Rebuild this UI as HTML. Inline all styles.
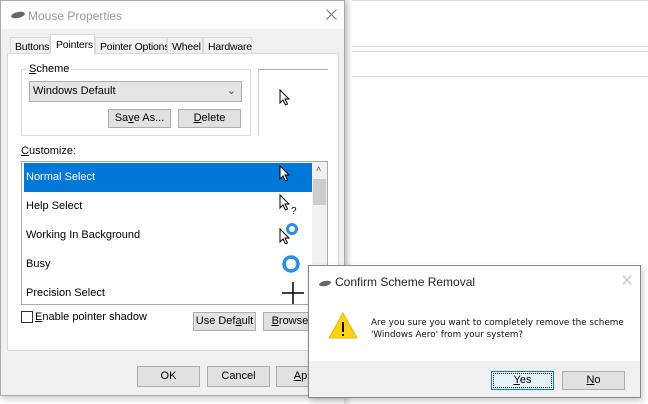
<!DOCTYPE html>
<html><head><style>
*{box-sizing:border-box;margin:0;padding:0}
body{width:648px;height:404px;background:#fff;position:relative;overflow:hidden;font-family:"Liberation Sans",sans-serif;font-size:11px;color:#000}
.a{position:absolute;white-space:nowrap}
.btn{position:absolute;background:#e1e1e1;border:1px solid #adadad;text-align:center;line-height:17px;font-size:11px;white-space:nowrap}
.hl{position:absolute;left:345px;right:0;height:1px;background:#d9d9d9}
u{text-decoration:underline}
.row{position:absolute;left:2px;width:288px;height:29px;line-height:29px;padding-left:2px}
.tab{font-size:10.5px;letter-spacing:-0.2px}
</style></head><body>
<div class="hl" style="top:0"></div>
<div class="hl" style="top:46px"></div>
<div class="hl" style="top:51px"></div>
<div class="hl" style="top:76px"></div>
<div class="a" style="left:344px;top:0;width:8px;height:404px;background:linear-gradient(90deg,#e4e4e4,#fff)"></div>
<div class="a" style="left:0;top:0;width:345px;height:396px;background:#f0f0f0;border:1px solid #aaa;box-shadow:2px 3px 6px rgba(0,0,0,.2)">
 <div class="a" style="left:0;top:0;width:343px;height:28px;background:#fff"></div>
 <svg class="a" style="left:9px;top:10px" width="16" height="8"><ellipse cx="8" cy="4" rx="7" ry="3" fill="#666" transform="rotate(-12 8 4)"/></svg>
 <div class="a" style="left:27px;top:8px;font-size:12px;color:#999">Mouse Properties</div>
 <svg class="a" style="left:325px;top:8px" width="11" height="11"><path d="M0.5 0.5L10.5 10.5M10.5 0.5L0.5 10.5" stroke="#777" stroke-width="1"/></svg>
 <div class="a" style="left:6px;top:52px;width:332px;height:298px;background:#fff;border:1px solid #d9d9d9"></div>
 <div class="a tab" style="left:9px;top:36px;width:40px;height:17px;border:1px solid #d9d9d9;background:#f0f0f0;padding:3px 0 0 4px">Buttons</div>
 <div class="a tab" style="left:49px;top:33px;width:45px;height:20px;border:1px solid #d9d9d9;border-bottom:none;background:#fff;padding:4px 0 0 5px">Pointers</div>
 <div class="a tab" style="left:94px;top:36px;width:72px;height:17px;border:1px solid #d9d9d9;background:#f0f0f0;padding:3px 0 0 4px">Pointer Options</div>
 <div class="a tab" style="left:166px;top:36px;width:36px;height:17px;border:1px solid #d9d9d9;background:#f0f0f0;padding:3px 0 0 4px">Wheel</div>
 <div class="a tab" style="left:202px;top:36px;width:49px;height:17px;border:1px solid #d9d9d9;background:#f0f0f0;padding:3px 0 0 4px">Hardware</div>
 <div class="a" style="left:20px;top:68px;width:230px;height:67px;border:1px solid #dcdcdc"></div>
 <div class="a" style="left:26px;top:62px;background:#fff;padding:0 2px"><u>S</u>cheme</div>
 <div class="a" style="left:28px;top:80px;width:213px;height:21px;background:#e5e5e5;border:1px solid #adadad;padding:3px 0 0 3px">Windows Default<span class="a" style="right:5px;top:2px;color:#555">⌄</span></div>
 <div class="btn" style="left:107px;top:108px;width:63px;height:19px">Sa<u>v</u>e As...</div>
 <div class="btn" style="left:177px;top:108px;width:63px;height:19px"><u>D</u>elete</div>
 <div class="a" style="left:257px;top:68px;width:70px;height:67px;border-top:1px solid #aaa;border-left:1px solid #ccc"></div>
 <svg class="a" style="left:278px;top:88px" width="12" height="18"><path d="M1 1 L1 14 L4 11 L6.5 16 L8.5 15 L6 10 L10 10 Z" fill="#fff" stroke="#000"/></svg>
 <div class="a" style="left:20px;top:144px"><u>C</u>ustomize:</div>
 <div class="a" style="left:20px;top:160px;width:307px;height:144px;border:1px solid #aaa;overflow:hidden">
  <div class="row" style="top:1px;background:#0078d7;color:#fff">Normal Select</div>
  <div class="row" style="top:30px">Help Select</div>
  <div class="row" style="top:59px">Working In Background</div>
  <div class="row" style="top:88px">Busy</div>
  <div class="row" style="top:117px">Precision Select</div>
  <div class="a" style="left:290px;top:0;width:15px;height:143px;background:#f0f0f0"></div>
  <div class="a" style="left:294px;top:2px;color:#555;font-size:9px">˄</div>
  <div class="a" style="left:291px;top:17px;width:13px;height:26px;background:#cdcdcd"></div>
  <svg class="a" style="left:257px;top:3px" width="12" height="18"><path d="M1 1 L1 14 L4 11 L6.5 16 L8.5 15 L6 10 L10 10 Z" fill="#fff" stroke="#000"/></svg>
  <svg class="a" style="left:257px;top:32px" width="22" height="22"><path d="M1 1 L1 14 L4 11 L6.5 16 L8.5 15 L6 10 L10 10 Z" fill="#fff" stroke="#000"/><text x="12" y="20" font-size="10" font-family="Liberation Sans">?</text></svg>
  <svg class="a" style="left:257px;top:60px" width="22" height="22"><path d="M1 7 L1 20 L4 17 L6.5 22 L8.5 21 L6 16 L10 16 Z" fill="#fff" stroke="#000"/><circle cx="13" cy="7" r="4.5" fill="none" stroke="#2a8ee8" stroke-width="3"/></svg>
  <svg class="a" style="left:259px;top:92px" width="20" height="20"><circle cx="10" cy="10" r="7" fill="none" stroke="#2a8ee8" stroke-width="3.5"/></svg>
  <svg class="a" style="left:260px;top:120px" width="22" height="22"><path d="M0 11H22M11 0V22" stroke="#000" stroke-width="1.5"/></svg>
 </div>
 <div class="a" style="left:20px;top:310px;width:12px;height:12px;border:1px solid #333;background:#fff"></div>
 <div class="a" style="left:34px;top:310px"><u>E</u>nable pointer shadow</div>
 <div class="btn" style="left:192px;top:311px;width:63px;height:19px">Use Def<u>a</u>ult</div>
 <div class="btn" style="left:262px;top:311px;width:63px;height:19px"><u>B</u>rowse...</div>
 <div class="btn" style="left:136px;top:365px;width:63px;height:21px;line-height:19px">OK</div>
 <div class="btn" style="left:206px;top:365px;width:63px;height:21px;line-height:19px">Cancel</div>
 <div class="btn" style="left:275px;top:365px;width:63px;height:21px;line-height:19px"><u>A</u>pply</div>
</div>
<div class="a" style="left:308px;top:265px;width:333px;height:133px;background:#f0f0f0;border:1px solid #888;box-shadow:2px 3px 6px rgba(0,0,0,.2)">
 <div class="a" style="left:0;top:0;width:331px;height:95px;background:#fff"></div>
 <svg class="a" style="left:9px;top:14px" width="14" height="7"><ellipse cx="7" cy="3.5" rx="6" ry="2.5" fill="#666" transform="rotate(-12 7 3.5)"/></svg>
 <div class="a" style="left:26px;top:9px;font-size:12px;color:#222">Confirm Scheme Removal</div>
 <svg class="a" style="left:313px;top:9px" width="10" height="10"><path d="M0.5 0.5L9.5 9.5M9.5 0.5L0.5 9.5" stroke="#bbb"/></svg>
 <svg class="a" style="left:19px;top:45px" width="30" height="28"><path d="M15 2 L29 27 L1 27 Z" fill="#fcd116" stroke="#e8b800"/><path d="M15 11V21" stroke="#000" stroke-width="2"/><rect x="14" y="23" width="2" height="2"/></svg>
 <div class="a" style="left:62px;top:51px;line-height:12px;font-family:'DejaVu Sans',sans-serif;font-size:8.8px;color:#111">Are you sure you want to completely remove the scheme<br>'Windows Aero' from your system?</div>
 <div class="btn" style="left:182px;top:105px;width:63px;height:19px;background:#e5f1fb;border-color:#0078d7;outline:1px dotted #000;outline-offset:-3px"><u>Y</u>es</div>
 <div class="btn" style="left:253px;top:105px;width:63px;height:19px"><u>N</u>o</div>
</div>
</body></html>
